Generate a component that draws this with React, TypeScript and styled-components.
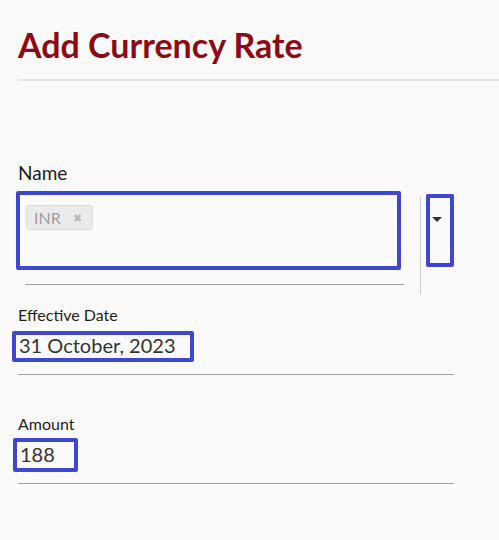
import React from 'react';
import styled, { createGlobalStyle } from 'styled-components';

const GlobalStyle = createGlobalStyle`
  body {
    margin: 0;
    background: #fafafa;
    font-family: Lato, "Open Sans", sans-serif;
  }
`;

const Page = styled.div`
  padding-left: 18px;
  padding-bottom: 40px;
`;

const Title = styled.h1`
  margin: 25px 0 0;
  padding-bottom: 14px;
  border-bottom: 2px solid #e4e4e4;
  font-size: 34px;
  line-height: 40px;
  font-weight: 700;
  color: #8b0a16;
`;

const Form = styled.div`
  width: 436px;
  margin-top: 80px;
`;

const Label = styled.div<{ $big?: boolean }>`
  font-size: ${(p) => (p.$big ? '19px' : '16px')};
  line-height: ${(p) => (p.$big ? '24px' : '18px')};
  color: #1e1e1e;
`;

const NameRow = styled.div`
  display: flex;
  align-items: flex-start;
  margin-top: 6px;
`;

const SelectColumn = styled.div`
  display: flex;
  flex-direction: column;
  width: 386px;
  margin-left: -2px;
`;

const SelectBox = styled.div`
  box-sizing: border-box;
  width: 385px;
  height: 79px;
  border: 4px solid #3f48cc;
  border-radius: 2px;
  padding: 10px 6px;
`;

const Chip = styled.span`
  display: inline-flex;
  align-items: center;
  box-sizing: border-box;
  height: 25px;
  width: 67px;
  padding: 0 0 0 7px;
  gap: 12px;
  background: #ebebeb;
  border: 1px solid #dcdcdc;
  border-radius: 3px;
  font-size: 16px;
  color: #9e9e9e;
`;

const ChipClose = styled.span`
  font-size: 11px;
  color: #b8b8b8;
`;

const Underline = styled.div<{ $inset?: number }>`
  height: 1px;
  background: #a0a0a0;
  margin-left: ${(p) => p.$inset || 0}px;
`;

const SelectLine = styled(Underline)`
  width: 379px;
  margin-top: 14px;
`;

const Divider = styled.div`
  width: 1px;
  height: 97px;
  margin: 6px 0 0 18px;
  background: #cccccc;
`;

const DropButton = styled.div`
  box-sizing: border-box;
  width: 29px;
  height: 73px;
  margin: 3px 0 0 5px;
  border: 4px solid #3f48cc;
  border-radius: 2px;
  padding: 19px 0 0 2px;
`;

const Caret = styled.div`
  width: 0;
  height: 0;
  border-left: 5px solid transparent;
  border-right: 5px solid transparent;
  border-top: 5px solid #333;
`;

const Field = styled.div<{ $gap: number }>`
  margin-top: ${(p) => p.$gap}px;
`;

const Value = styled.div<{ $width: number; $shift: number; $height: number }>`
  box-sizing: border-box;
  width: ${(p) => p.$width}px;
  height: ${(p) => p.$height}px;
  margin-left: ${(p) => p.$shift}px;
  border: 4px solid #3f48cc;
  border-radius: 2px;
  padding-left: 3px;
  font-size: 20px;
  line-height: 21px;
  color: #333333;
`;

const Spacer = styled.div<{ $h: number }>`
  height: ${(p) => p.$h}px;
`;

export default function App() {
  return (
    <Page>
      <GlobalStyle />
      <Title>Add Currency Rate</Title>
      <Form>
        <Label $big>Name</Label>
        <NameRow>
          <SelectColumn>
            <SelectBox>
              <Chip>
                INR <ChipClose>✖</ChipClose>
              </Chip>
            </SelectBox>
            <SelectLine $inset={9} />
          </SelectColumn>
          <Divider />
          <DropButton>
            <Caret />
          </DropButton>
        </NameRow>

        <Field $gap={12}>
          <Label>Effective Date</Label>
          <Spacer $h={7} />
          <Value $width={182} $shift={-6} $height={31}>
            31 October, 2023
          </Value>
          <Spacer $h={12} />
          <Underline />
        </Field>

        <Field $gap={40}>
          <Label>Amount</Label>
          <Spacer $h={5} />
          <Value $width={65} $shift={-5} $height={34} style={{ paddingTop: 2 }}>
            188
          </Value>
          <Spacer $h={11} />
          <Underline />
        </Field>
      </Form>
    </Page>
  );
}
